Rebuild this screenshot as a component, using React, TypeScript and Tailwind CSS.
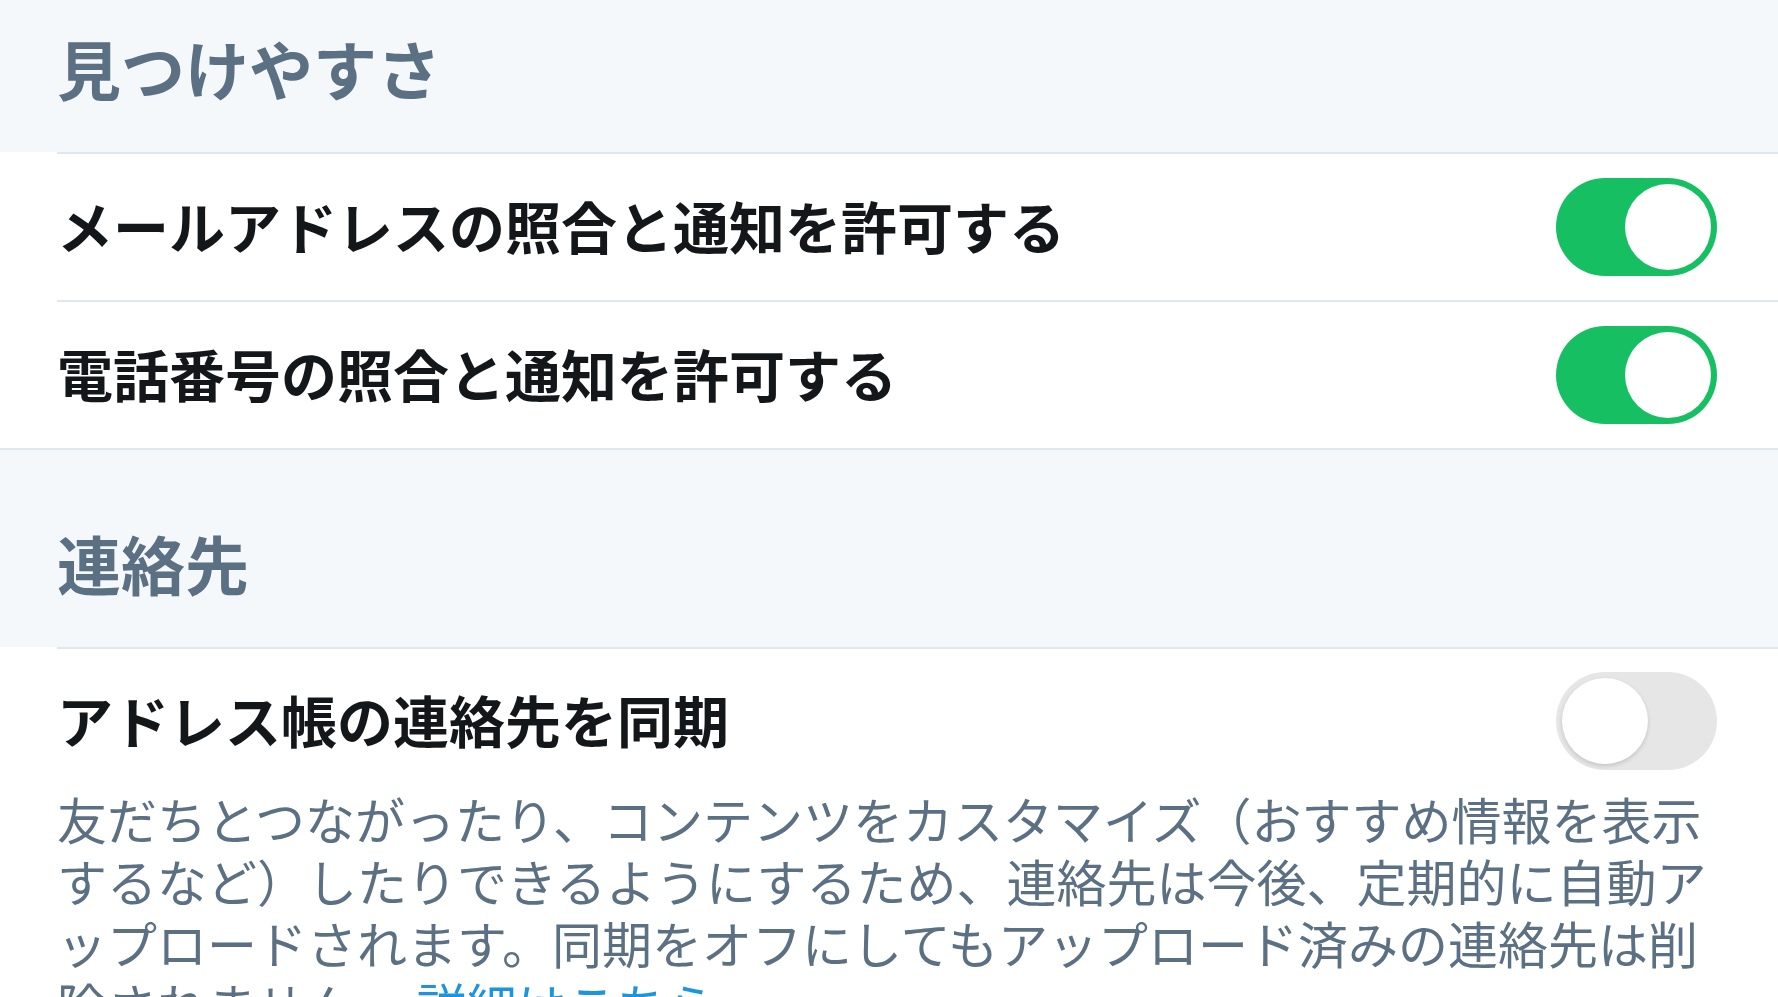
import React from 'react';

const Toggle = ({ on }: { on: boolean }) => (
  <div
    className={
      on
        ? 'w-[161px] h-[98px] shrink-0 rounded-full bg-[#17bf63] flex items-center justify-end px-[6px]'
        : 'w-[161px] h-[98px] shrink-0 rounded-full bg-[#e6e6e6] flex items-center justify-start px-[6px]'
    }
  >
    <div
      className={
        on
          ? 'w-[86px] h-[86px] rounded-full bg-white'
          : 'w-[86px] h-[86px] rounded-full bg-white shadow-[0_2px_4px_rgba(0,0,0,0.15)]'
      }
    />
  </div>
);

const SettingRow = ({ label, on }: { label: string; on: boolean }) => (
  <div className="pl-[57px]">
    <div className="h-[148px] border-t-2 border-[#e1e8ed] flex items-center justify-between pr-[61px]">
      <span className="pb-[5px] text-[56px] leading-none font-bold text-[#14171a]">{label}</span>
      <Toggle on={on} />
    </div>
  </div>
);

export default function App() {
  return (
    <div
      lang="ja"
      className="w-[1778px] h-[997px] overflow-hidden bg-white font-['Noto_Sans_CJK_JP','Noto_Sans',sans-serif]"
    >
      {/* 見つけやすさ */}
      <div className="h-[152px] bg-[#f5f8fa] pl-[57px] pt-[35px]">
        <h2 className="text-[64px] leading-none font-bold text-[#5b7083]">見つけやすさ</h2>
      </div>
      <div className="border-b-2 border-[#e1e8ed]">
        <SettingRow label="メールアドレスの照合と通知を許可する" on />
        <SettingRow label="電話番号の照合と通知を許可する" on />
      </div>

      {/* 連絡先 */}
      <div className="h-[197px] bg-[#f5f8fa] pl-[57px] pt-[80px]">
        <h2 className="text-[64px] leading-none font-bold text-[#5b7083]">連絡先</h2>
      </div>
      <div className="pl-[57px]">
        <div className="border-t-2 border-[#e1e8ed] pr-[61px] pt-[23px]">
          <div className="flex items-center justify-between">
            <span className="pb-[5px] text-[56px] leading-none font-bold text-[#14171a]">アドレス帳の連絡先を同期</span>
            <Toggle on={false} />
          </div>
          <p className="mt-[17px] text-[50px] leading-[62px] text-[#5b7083]">
            友だちとつながったり、コンテンツをカスタマイズ（おすすめ情報を表示するなど）したりできるようにするため、連絡先は今後、定期的に自動アップロードされます。同期をオフにしてもアップロード済みの連絡先は削除されません。{' '}
            <a className="text-[#1b95e0]">詳細はこちら</a>
          </p>
        </div>
      </div>
    </div>
  );
}
